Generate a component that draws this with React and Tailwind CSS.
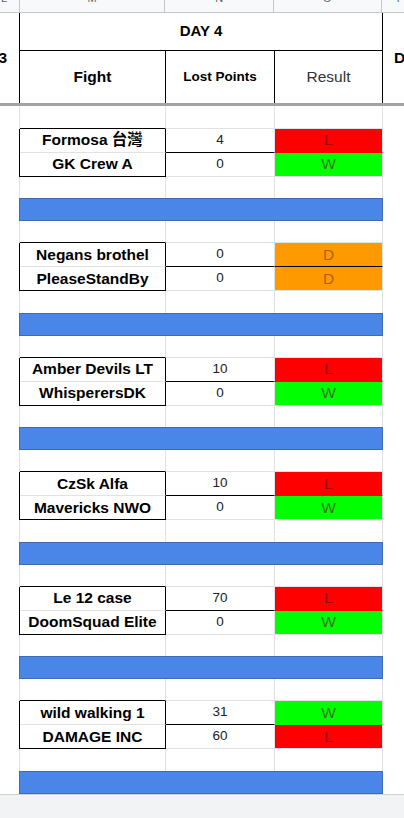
const groups = [
  { a: 'Formosa 台灣', b: 'GK Crew A', pa: '4', pb: '0', ra: 'L', rb: 'W' },
  { a: 'Negans brothel', b: 'PleaseStandBy', pa: '0', pb: '0', ra: 'D', rb: 'D' },
  { a: 'Amber Devils LT', b: 'WhisperersDK', pa: '10', pb: '0', ra: 'L', rb: 'W' },
  { a: 'CzSk Alfa', b: 'Mavericks NWO', pa: '10', pb: '0', ra: 'L', rb: 'W' },
  { a: 'Le 12 case', b: 'DoomSquad Elite', pa: '70', pb: '0', ra: 'L', rb: 'W' },
  { a: 'wild walking 1', b: 'DAMAGE INC', pa: '31', pb: '60', ra: 'W', rb: 'L' },
];

const resultClass = {
  L: 'bg-[#ff0000] text-[#990000]',
  W: 'bg-[#00ff00] text-[#38761d]',
  D: 'bg-[#ff9900] text-[#b45f06]',
};

function BlankRow({ h, topOfTeam }) {
  return (
    <div className={`flex ${h}`}>
      <div className="w-[20px] border-r border-[#e2e2e2]" />
      <div
        className={
          topOfTeam
            ? 'w-[146px] border-r border-b border-r-[#e2e2e2] border-b-black'
            : 'w-[146px] border-r border-[#e2e2e2]'
        }
      />
      <div className={topOfTeam ? 'w-[109px] border-r border-b border-[#e2e2e2]' : 'w-[109px] border-r border-[#e2e2e2]'} />
      <div className={topOfTeam ? 'w-[108px] border-r border-b border-[#e2e2e2]' : 'w-[108px] border-r border-[#e2e2e2]'} />
      <div className="flex-1" />
    </div>
  );
}

function BlueRow() {
  return (
    <div className="flex h-[23px]">
      <div className="w-[19px]" />
      <div className="w-[364px] border border-[#3d6cb5] bg-[#4a86e8]" />
      <div className="flex-1" />
    </div>
  );
}

function TeamRow({ name, points, result, first }) {
  return (
    <div className="flex h-[24px]">
      <div className="w-[20px] border-r border-black" />
      <div
        className={`w-[146px] flex items-center justify-center border-r border-b border-r-black text-[15.5px] font-bold text-black whitespace-nowrap ${
          first ? 'border-b-[#e2e2e2]' : 'border-b-black'
        }`}
      >
        {name}
      </div>
      <div
        className={`w-[109px] flex items-center justify-center border-r border-b border-r-[#e2e2e2] text-[13.5px] text-[#222] ${
          first ? 'border-b-black' : 'border-b-[#e2e2e2]'
        }`}
      >
        {points}
      </div>
      <div
        className={`w-[108px] flex items-center justify-center border-r border-b border-r-[#e2e2e2] text-[15.5px] ${resultClass[result]} ${
          first ? (result === 'D' ? 'border-b-black' : 'border-b-transparent') : 'border-b-[#e2e2e2]'
        }`}
      >
        {result}
      </div>
      <div className="flex-1" />
    </div>
  );
}

export default function App() {
  return (
    <div className="w-[404px] h-[818px] flex flex-col overflow-hidden bg-white font-['Liberation_Sans','Noto_Sans_CJK_TC',sans-serif]">
      {/* column letters */}
      <div className="flex h-[13px] bg-[#f8f9fa] border-b border-[#c7c7c7] text-[11px] text-[#5f6368] overflow-hidden">
        <div className="w-[20px] border-r border-[#c7c7c7] flex items-start justify-start pl-[1px]">
          <span className="leading-none -mt-[7px]">L</span>
        </div>
        <div className="w-[146px] border-r border-[#c7c7c7] flex items-start justify-center">
          <span className="leading-none -mt-[7px]">M</span>
        </div>
        <div className="w-[109px] border-r border-[#c7c7c7] flex items-start justify-center">
          <span className="leading-none -mt-[7px]">N</span>
        </div>
        <div className="w-[108px] border-r border-[#c7c7c7] flex items-start justify-center">
          <span className="leading-none -mt-[7px]">O</span>
        </div>
        <div className="flex-1 flex items-start pl-[15px]">
          <span className="leading-none -mt-[7px]">P</span>
        </div>
      </div>

      {/* frozen header */}
      <div className="flex h-[90px]">
        <div className="w-[20px] border-r border-black flex items-center justify-end pr-[12px] overflow-hidden whitespace-nowrap text-[15.5px] font-bold text-black">
          DAY 3
        </div>
        <div className="w-[363px] border-r border-black flex flex-col">
          <div className="h-[38px] border-b border-black flex items-center justify-center text-[15px] font-bold text-black">
            DAY 4
          </div>
          <div className="flex-1 flex">
            <div className="w-[146px] border-r border-black flex items-center justify-center text-[15.5px] font-bold text-black">
              Fight
            </div>
            <div className="w-[109px] border-r border-black flex items-center justify-center text-[13.5px] font-bold text-black">
              Lost Points
            </div>
            <div className="flex-1 flex items-center justify-center text-[15.5px] text-[#333]">
              Result
            </div>
          </div>
        </div>
        <div className="flex-1 flex items-center pl-[11px] overflow-hidden whitespace-nowrap text-[15.5px] font-bold text-black">
          DAY 5
        </div>
      </div>

      <div className="h-[3px] bg-[#a3a3a3]" />

      {groups.map((g, i) => (
        <div key={i} className="flex flex-col">
          <BlankRow h={i === 0 ? 'h-[22.5px]' : 'h-[22px]'} topOfTeam />
          <TeamRow name={g.a} points={g.pa} result={g.ra} first />
          <TeamRow name={g.b} points={g.pb} result={g.rb} />
          <BlankRow h="h-[21.5px]" />
          <BlueRow />
        </div>
      ))}

      <div className="flex-1 bg-[#f1f3f4] border-t border-[#d0d0d0]" />
    </div>
  );
}
